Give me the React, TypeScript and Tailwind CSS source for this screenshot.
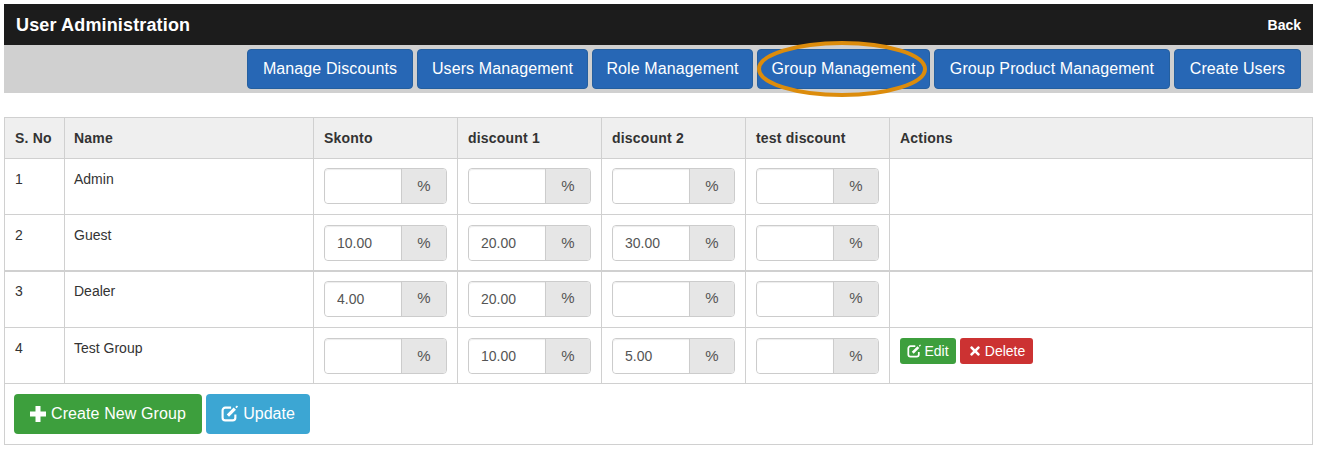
import { FaTimes } from "react-icons/fa";

const navItems = [
  { label: "Manage Discounts", width: "w-[166px]" },
  { label: "Users Management", width: "w-[171px]" },
  { label: "Role Management", width: "w-[161px]" },
  { label: "Group Management", width: "w-[173px]" },
  { label: "Group Product Management", width: "w-[236px]" },
  { label: "Create Users", width: "w-[127px]" },
];

const headers = ["Skonto", "discount 1", "discount 2", "test discount"];

const rows = [
  { no: 1, name: "Admin", values: ["", "", "", ""], height: "h-[56px]", pad: "pt-[9px]", text: "pt-[10px]" },
  { no: 2, name: "Guest", values: ["10.00", "20.00", "30.00", ""], height: "h-[56px] border-b-2 border-[#d0d0d0]", pad: "pt-[10px]", text: "pt-[10px]" },
  { no: 3, name: "Dealer", values: ["4.00", "20.00", "", ""], height: "h-[57px]", pad: "pt-[9px]", text: "pt-[9px]" },
  { no: 4, name: "Test Group", values: ["", "10.00", "5.00", ""], height: "h-[56px]", pad: "pt-[10px]", text: "pt-[10px]", actions: true },
];

function EditIcon({ size }: { size: number }) {
  return (
    <svg width={size} height={size} viewBox="0 0 16 16" fill="none" stroke="currentColor" className="shrink-0">
      <path d="M9.5 2.500H4A2.500 2.500 0 0 0 1.500 5v7A2.500 2.500 0 0 0 4 14.500h7a2.500 2.500 0 0 0 2.500-2.500V9" strokeWidth="2" />
      <path d="M6.500 10 13 3.500" strokeWidth="3" />
      <path d="M14 2.500 15.500 1" strokeWidth="1.500" />
    </svg>
  );
}

function PercentInput({ value }: { value: string }) {
  return (
    <div className="flex h-[36px] w-[123px] rounded-[4px] border border-[#ccc]">
      <input
        readOnly
        value={value}
        className="h-full w-[76px] rounded-l-[4px] bg-white px-3 text-[14px] text-[#555] shadow-[inset_0_1px_1px_rgba(0,0,0,0.075)] outline-none"
      />
      <span className="flex flex-1 items-center justify-center rounded-r-[3px] border-l border-[#ccc] bg-[#e6e6e6] text-[15px] text-[#555]">
        %
      </span>
    </div>
  );
}

export default function App() {
  return (
    <div className="h-[449px] bg-white p-[4px] font-['Liberation_Sans',Arial,sans-serif] text-[14px] text-[#333]">
      <div className="flex h-[41px] items-center justify-between bg-[#1c1c1c] px-[12px] text-white">
        <h1 className="mt-[1px] text-[18px] font-bold tracking-[0.15px]">User Administration</h1>
        <a className="mt-[2px] text-[14px] font-bold">Back</a>
      </div>

      <div className="flex h-[48px] items-center justify-end gap-[4px] bg-[#d0d0d0] pr-[12px]">
        {navItems.map((item) => (
          <div key={item.label} className="relative">
            <button
              className={`${item.width} h-[40px] rounded-[4px] border border-[#245f9f] bg-[#2767b5] text-center text-[16px] tracking-[0.1px] text-white`}
            >
              {item.label}
            </button>
            {item.label === "Group Management" && (
              <svg
                className="pointer-events-none absolute left-[0px] top-[-8px]"
                width="170"
                height="56"
                viewBox="0 0 170 56"
                fill="none"
              >
                <ellipse cx="85" cy="28" rx="83" ry="26" stroke="#dc8c0c" strokeWidth="4" />
              </svg>
            )}
          </div>
        ))}
      </div>

      <table className="mt-[24px] w-[1309px] table-fixed border-collapse border border-[#d0d0d0]">
        <colgroup>
          <col className="w-[60px]" />
          <col className="w-[249px]" />
          <col className="w-[144px]" />
          <col className="w-[144px]" />
          <col className="w-[144px]" />
          <col className="w-[144px]" />
          <col />
        </colgroup>
        <thead>
          <tr className="h-[41px] bg-[#efefef] text-left text-[14px]">
            <th className="border border-[#d0d0d0] px-[10px] font-bold tracking-[0.2px]">S. No</th>
            <th className="border border-[#d0d0d0] px-[9px] font-bold tracking-[0.2px]">Name</th>
            {headers.map((h) => (
              <th key={h} className="border border-[#d0d0d0] px-[10px] font-bold tracking-[0.2px]">
                {h}
              </th>
            ))}
            <th className="border border-[#d0d0d0] px-[10px] font-bold tracking-[0.2px]">Actions</th>
          </tr>
        </thead>
        <tbody>
          {rows.map((row) => (
            <tr key={row.no} className={row.height}>
              <td className={`border border-[#d0d0d0] px-[10px] align-top ${row.text}`}>{row.no}</td>
              <td className={`border border-[#d0d0d0] px-[9px] align-top ${row.text}`}>{row.name}</td>
              {row.values.map((v, i) => (
                <td key={i} className={`border border-[#d0d0d0] px-[10px] align-top ${row.pad}`}>
                  <PercentInput value={v} />
                </td>
              ))}
              <td className={`border border-[#d0d0d0] px-[10px] align-top ${row.pad}`}>
                {row.actions && (
                  <div className="flex gap-[4px]">
                    <button className="flex h-[26px] w-[56px] items-center justify-center gap-[3px] rounded-[3px] bg-[#3d9f3d] text-[14px] text-white">
                      <EditIcon size={14} />
                      Edit
                    </button>
                    <button className="flex h-[26px] w-[73px] items-center justify-center gap-[3px] rounded-[3px] bg-[#cc3232] text-[14px] text-white">
                      <FaTimes className="text-[14px]" />
                      Delete
                    </button>
                  </div>
                )}
              </td>
            </tr>
          ))}
          <tr className="h-[61px]">
            <td colSpan={7} className="border border-[#d0d0d0] pl-[9px]">
              <div className="flex gap-[4px]">
                <button className="flex h-[40px] w-[188px] items-center justify-center gap-[5px] rounded-[4px] bg-[#3d9f3d] text-[16px] tracking-[0.1px] text-white">
                  <svg width="16" height="16" viewBox="0 0 16 16" className="mb-[1px] shrink-0" fill="currentColor">
                    <path d="M5.500 0h5v5.500H16v5h-5.500V16h-5v-5.500H0v-5h5.500z" />
                  </svg>
                  Create New Group
                </button>
                <button className="flex h-[40px] w-[104px] items-center justify-center gap-[5px] rounded-[4px] bg-[#3ca6d3] text-[16px] text-white">
                  <span className="mb-[2px]">
                    <EditIcon size={17} />
                  </span>
                  Update
                </button>
              </div>
            </td>
          </tr>
        </tbody>
      </table>
    </div>
  );
}
